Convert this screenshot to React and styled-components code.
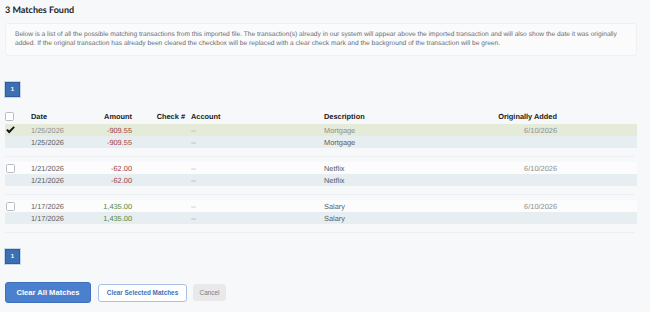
import React from "react";
import styled, { createGlobalStyle } from "styled-components";

const Global = createGlobalStyle`
  html, body { margin: 0; padding: 0; background: #f7f8fa; }
  body { font-family: "Liberation Sans", Arial, sans-serif; text-rendering: geometricPrecision; }
  * { box-sizing: border-box; }
`;

const Page = styled.div`
  padding: 4px 13px 0 5px;
  width: 650px;
  height: 312px;
  overflow: hidden;
`;

const Title = styled.h2`
  margin: 0;
  font-family: Lato, "Open Sans", sans-serif;
  font-weight: 700;
  font-size: 9px;
  line-height: 12px;
  color: #222;
`;

const InfoBox = styled.div`
  margin-top: 7px;
  background: #fbfbfc;
  border: 1px solid #eef0f3;
  border-radius: 3px;
  padding: 6px 10px 7px 9px;
  font-size: 6.65px;
  line-height: 9px;
  color: #6a6d72;
`;

const PageButton = styled.div`
  margin-top: ${(p) => p.$top}px;
  width: 15px;
  height: 15px;
  background: #3d6fb3;
  border: 1px solid #2f5d9c;
  box-shadow: 0 0 0 1px #c9d6e8;
  color: #fff;
  font-size: 6px;
  font-weight: 700;
  display: flex;
  align-items: center;
  justify-content: center;
`;

const Table = styled.div`
  margin-top: 12px;
`;

const Row = styled.div`
  display: grid;
  grid-template-columns: 26px 59px 42px 53px 139px 156px 77px 1fr;
  align-items: center;
  height: ${(p) => (p.$header ? 15 : 12)}px;
  background: ${(p) => p.$bg || "transparent"};
  font-size: 7.4px;
  color: ${(p) => (p.$header ? "#222" : p.$muted ? "#8e8e8e" : "#5c5c5c")};
  font-weight: ${(p) => (p.$header ? 700 : 400)};
`;

const Cell = styled.div`
  white-space: nowrap;
  padding-left: ${(p) => p.$pl || 0}px;
  color: ${(p) => p.$color || "inherit"};
  display: flex;
  align-items: center;
  justify-content: ${(p) => (p.$right ? "flex-end" : "flex-start")};
`;

const Box = styled.span`
  display: inline-block;
  width: 9px;
  height: 9px;
  border: 1px solid #b9bcc0;
  border-radius: 1.5px;
  background: #fff;
`;

const Separator = styled.div`
  margin: 8px 3px 5px 0;
  border-top: 1px solid #eceef1;
`;

const Actions = styled.div`
  margin-top: 18px;
  display: flex;
  align-items: center;
  gap: 6px;
`;

const Button = styled.button`
  font-family: "Liberation Sans", Arial, sans-serif;
  font-weight: 700;
  border-radius: 3px;
  cursor: pointer;
  padding: 0;
  ${(p) =>
    p.$variant === "primary"
      ? `background:#4b80cf;border:1px solid #3f70bd;color:#fff;width:86px;height:21px;font-size:7.6px;margin-right:1px;`
      : p.$variant === "outline"
      ? `background:#fff;border:1px solid #a9bfe3;color:#4270b6;width:89px;height:18px;font-size:6.4px;`
      : `background:#e9e9eb;border:1px solid #e9e9eb;color:#7a7a7e;width:33px;height:17px;font-size:6.4px;font-weight:400;`}
`;

const Check = () => (
  <svg width="9" height="8" viewBox="0 0 9 8">
    <path d="M0.2 4.3 L1.6 3.0 L3.2 4.6 L7.6 0.2 L8.8 1.4 L3.2 7.4 Z" fill="#111" />
  </svg>
);

const RED = "#9a4347";
const GREEN = "#4f8a3c";

const groups = [
  { date: "1/25/2026", amt: "-909.55", color: RED, desc: "Mortgage", cleared: true },
  { date: "1/21/2026", amt: "-62.00", color: RED, desc: "Netflix" },
  { date: "1/17/2026", amt: "1,435.00", color: GREEN, desc: "Salary" },
];

export default function App() {
  return (
    <Page>
      <Global />
      <Title>3 Matches Found</Title>
      <InfoBox>
        Below is a list of all the possible matching transactions from this imported file. The transaction(s) already in our system will appear above the imported transaction and will also show the date it was originally added. If the original transaction has already been cleared the checkbox will be replaced with a clear check mark and the background of the transaction will be green.
      </InfoBox>
      <PageButton $top={26}>1</PageButton>
      <Table>
        <Row $header>
          <Cell><Box /></Cell>
          <Cell>Date</Cell>
          <Cell $right>Amount</Cell>
          <Cell $right>Check #</Cell>
          <Cell $pl={6}>Account</Cell>
          <Cell>Description</Cell>
          <Cell $right>Originally Added</Cell>
          <Cell />
        </Row>
        {groups.map((g) => (
          <React.Fragment key={g.date}>
            <Row $bg={g.cleared ? "#e4ebd9" : "#fcfcfc"} $muted={g.cleared}>
              <Cell $pl={1}>{g.cleared ? <Check /> : <Box />}</Cell>
              <Cell>{g.date}</Cell>
              <Cell $right $color={g.color}>{g.amt}</Cell>
              <Cell $right />
              <Cell $pl={6} $color="#a0a0a0">--</Cell>
              <Cell>{g.desc}</Cell>
              <Cell $right $color="#8e8e8e">6/10/2026</Cell>
              <Cell />
            </Row>
            <Row $bg="#e6eef1">
              <Cell />
              <Cell>{g.date}</Cell>
              <Cell $right $color={g.color}>{g.amt}</Cell>
              <Cell $right />
              <Cell $pl={6} $color="#909090">--</Cell>
              <Cell>{g.desc}</Cell>
              <Cell $right />
              <Cell />
            </Row>
            <Separator />
          </React.Fragment>
        ))}
      </Table>
      <PageButton $top={16}>1</PageButton>
      <Actions>
        <Button $variant="primary">Clear All Matches</Button>
        <Button $variant="outline">Clear Selected Matches</Button>
        <Button $variant="plain">Cancel</Button>
      </Actions>
    </Page>
  );
}
